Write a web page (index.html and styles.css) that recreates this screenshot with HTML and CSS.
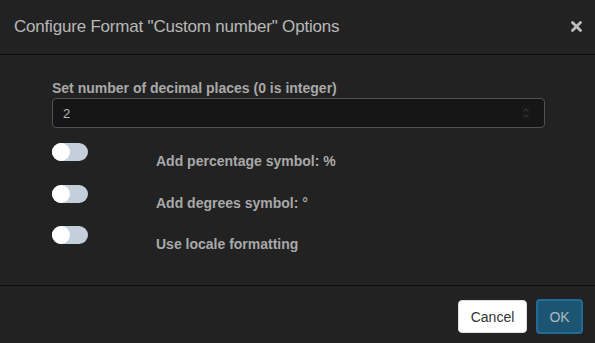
FILE: index.html
```
<!DOCTYPE html>
<html>
<head>
<meta charset="utf-8">
<link rel="stylesheet" href="styles.css">
</head>
<body>
<div class="dialog">
  <div class="header">
    <div class="title">Configure Format "Custom number" Options</div>
    <svg class="close" width="11" height="11" viewBox="0 0 11 11"><path d="M1.5 1.5 L9.5 9.5 M9.5 1.5 L1.5 9.5" stroke="#bdbdbd" stroke-width="2.8" stroke-linecap="round"/></svg>
  </div>
  <div class="body">
    <div class="field-label">Set number of decimal places (0 is integer)</div>
    <div class="input">
      <span class="value">2</span>
      <svg class="spin" width="8" height="12" viewBox="0 0 8 12"><path d="M1.5 4.5 L4 2 L6.5 4.5 M1.5 7.5 L4 10 L6.5 7.5" fill="none" stroke="#303030" stroke-width="1.4"/></svg>
    </div>
    <div class="options">
      <div class="row"><span class="toggle"><span class="knob"></span></span><span class="opt-label">Add percentage symbol: %</span></div>
      <div class="row"><span class="toggle"><span class="knob"></span></span><span class="opt-label">Add degrees symbol: °</span></div>
      <div class="row"><span class="toggle"><span class="knob"></span></span><span class="opt-label">Use locale formatting</span></div>
    </div>
  </div>
  <div class="footer">
    <button class="btn cancel">Cancel</button>
    <button class="btn ok">OK</button>
  </div>
</div>
</body>
</html>
```
FILE: styles.css
```
html, body {
  margin: 0;
  padding: 0;
  background: #222222;
}
body {
  font-family: "Liberation Sans", Arial, sans-serif;
}
.dialog {
  width: 595px;
  height: 343px;
  display: flex;
  flex-direction: column;
  background: #222222;
}
.header {
  height: 54px;
  border-bottom: 1px solid #0e0e0e;
  display: flex;
  align-items: center;
  justify-content: space-between;
  padding: 0 14px 0 14px;
  box-sizing: content-box;
}
.title {
  font-size: 17px;
  letter-spacing: -0.2px;
  color: #b8b8b8;
}
.close {
  margin-top: -1px;
  margin-right: -1px;
}
.body {
  flex: 1;
  padding: 24px 50px 0 52px;
}
.field-label {
  font-size: 14px;
  line-height: 18px;
  font-weight: bold;
  color: #a9a9a9;
  margin-bottom: 1px;
}
.input {
  height: 28px;
  border: 1px solid #515151;
  border-radius: 4px;
  background: #161616;
  display: flex;
  align-items: center;
  justify-content: space-between;
  padding: 0 14px 0 10px;
}
.value {
  font-size: 13px;
  color: #b6b6b6;
}
.options {
  margin-top: 15px;
}
.row {
  display: grid;
  grid-template-columns: 104px 1fr;
  height: 41.5px;
}
.toggle {
  width: 36px;
  height: 18px;
  border-radius: 9px;
  background: #c3cfdb;
  position: relative;
}
.knob {
  position: absolute;
  left: 0;
  top: 0;
  width: 18px;
  height: 18px;
  border-radius: 50%;
  background: #ffffff;
}
.opt-label {
  font-size: 14px;
  line-height: 18px;
  font-weight: bold;
  color: #a9a9a9;
  padding-top: 9px;
}
.footer {
  height: 58px;
  border-top: 1px solid #0e0e0e;
  display: flex;
  justify-content: flex-end;
  align-items: center;
  gap: 9px;
  padding: 4px 12px 0 0;
  box-sizing: border-box;
}
.btn {
  font-family: "Liberation Sans", Arial, sans-serif;
  font-size: 14px;
  border-radius: 4px;
  cursor: pointer;
}
.cancel {
  width: 69px;
  height: 33px;
  background: #ffffff;
  color: #333333;
  border: 1px solid #dddddd;
}
.ok {
  width: 47px;
  height: 35px;
  background: #1b5572;
  color: #b0b8c0;
  border: 2px solid #23699a;
}
```
